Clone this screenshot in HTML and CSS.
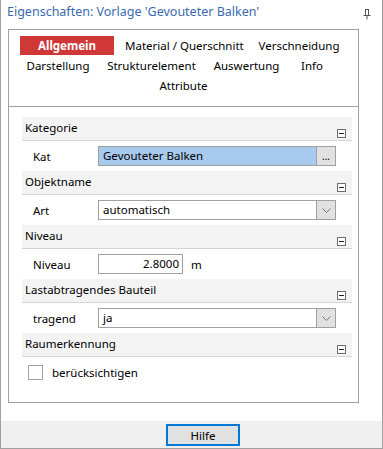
FILE: index.html
```html
<!DOCTYPE html>
<html lang="de">
<head>
  <meta charset="UTF-8">
  <title>Eigenschaften</title>
<link rel="stylesheet" href="styles.css">
</head>
<body>
<div class="window">
  <div class="titlebar">
    <span class="title">Eigenschaften: Vorlage 'Gevouteter Balken'</span>
    <svg class="pin" width="8" height="12" viewBox="0 0 8 12">
      <path d="M0.5 7.5h7M2.5 1.5v6M5.5 1.5v6M2 1.5h4M4 7.5v4" stroke="#555" stroke-width="1" fill="none"/>
    </svg>
  </div>
  <div class="panel">
    <div class="tabs">
      <div class="tab-row row-three">
        <span class="tab active">Allgemein</span>
        <span class="tab">Material / Querschnitt</span>
        <span class="tab">Verschneidung</span>
      </div>
      <div class="tab-row row-four">
        <span class="tab t1">Darstellung</span>
        <span class="tab t2">Strukturelement</span>
        <span class="tab t3">Auswertung</span>
        <span class="tab t4">Info</span>
      </div>
      <div class="tab-row row-one">
        <span class="tab">Attribute</span>
      </div>
    </div>
    <div class="groups">
      <div class="group">
        <div class="group-head"><span>Kategorie</span><i class="collapse"></i></div>
        <div class="prop">
          <span class="prop-label">Kat</span>
          <div class="field selected">
            <span class="field-text">Gevouteter Balken</span>
            <span class="field-btn">...</span>
          </div>
        </div>
      </div>
      <div class="group">
        <div class="group-head"><span>Objektname</span><i class="collapse"></i></div>
        <div class="prop">
          <span class="prop-label">Art</span>
          <div class="field">
            <span class="field-text">automatisch</span>
            <span class="field-btn">
              <svg width="9" height="5" viewBox="0 0 9 5"><path d="M0.5 0.5l4 4 4-4" stroke="#777" fill="none"/></svg>
            </span>
          </div>
        </div>
      </div>
      <div class="group">
        <div class="group-head"><span>Niveau</span><i class="collapse"></i></div>
        <div class="prop">
          <span class="prop-label">Niveau</span>
          <div class="field short"><span class="field-text num">2.8000</span></div>
          <span class="unit">m</span>
        </div>
      </div>
      <div class="group">
        <div class="group-head"><span>Lastabtragendes Bauteil</span><i class="collapse"></i></div>
        <div class="prop">
          <span class="prop-label">tragend</span>
          <div class="field">
            <span class="field-text">ja</span>
            <span class="field-btn">
              <svg width="9" height="5" viewBox="0 0 9 5"><path d="M0.5 0.5l4 4 4-4" stroke="#777" fill="none"/></svg>
            </span>
          </div>
        </div>
      </div>
      <div class="group">
        <div class="group-head"><span>Raumerkennung</span><i class="collapse"></i></div>
        <label class="check-row"><span class="checkbox"></span>berücksichtigen</label>
      </div>
    </div>
  </div>
  <div class="spacer"></div>
  <div class="footer">
    <button class="help">Hilfe</button>
  </div>
</div>
</body>
</html>
```

FILE: styles.css
```css
body {
  margin: 0;
  padding: 0;
  font-family: "Noto Sans", "Liberation Sans", sans-serif;
  font-size: 11.5px;
  color: #000;
  background: #fff;
}
.window {
  width: 383px;
  height: 449px;
  box-sizing: border-box;
  border: 1px solid #a0a0a0;
  border-top: none;
  display: flex;
  flex-direction: column;
}
.titlebar {
  height: 29px;
  display: flex;
  align-items: flex-start;
  justify-content: space-between;
}
.title {
  margin: 3px 0 0 6px;
  font-size: 12.5px;
  color: #3a6ab0;
}
.pin {
  margin: 8px 11px 0 0;
}
.panel {
  margin-left: 7px;
  width: 351px;
  height: 374px;
  box-sizing: border-box;
  border: 1px solid #a0a0a0;
}
.tabs {
  height: 77px;
  box-sizing: border-box;
  padding-top: 5px;
  border-bottom: 1px solid #a0a0a0;
}
.tab-row {
  display: flex;
  height: 20px;
  align-items: center;
}
.tab {
  white-space: nowrap;
  text-align: center;
}
.row-three .tab {
  width: 116px;
}
.tab.active {
  width: 94px;
  height: 19px;
  line-height: 19px;
  margin: 0 11px;
  background: #d03737;
  color: #fff;
  font-weight: bold;
}
.t1 {
  width: 98px;
}
.t2 {
  width: 89px;
}
.t3 {
  width: 101px;
}
.t4 {
  width: 30px;
}
.row-one {
  justify-content: center;
}
.groups {
  padding: 10px 6px 0 13px;
}
.group-head {
  height: 23px;
  background: #f3f3f3;
  border-bottom: 1px solid #d5d5d5;
  display: flex;
  justify-content: space-between;
  padding: 0 6px 0 3px;
}
.group-head span {
  margin-top: 3px;
}
.collapse {
  align-self: flex-end;
  margin-bottom: 2px;
  width: 9px;
  height: 9px;
  box-sizing: border-box;
  border: 1px solid #6d6d6d;
  background: #fff;
  position: relative;
}
.collapse::after {
  content: "";
  position: absolute;
  left: 1px;
  right: 1px;
  top: 3px;
  height: 1px;
  background: #222;
}
.prop {
  height: 30px;
  display: flex;
  align-items: center;
}
.prop-label {
  width: 65px;
  padding-left: 11px;
}
.field {
  width: 238px;
  height: 20px;
  box-sizing: border-box;
  border: 1px solid #a0a0a0;
  display: flex;
  align-items: stretch;
  background: #fff;
}
.field.selected {
  background: #a8caee;
}
.field-text {
  flex: 1;
  padding-left: 4px;
  line-height: 17px;
}
.field-text.num {
  text-align: right;
  padding: 0 3px 0 0;
}
.field-btn {
  width: 18px;
  border-left: 1px solid #a0a0a0;
  background: #e1e1e1;
  display: flex;
  align-items: center;
  justify-content: center;
  font-size: 10px;
}
.field.short {
  width: 85px;
}
.unit {
  margin-left: 8px;
}
.check-row {
  display: flex;
  align-items: center;
  height: 30px;
  padding-left: 6px;
}
.checkbox {
  width: 13px;
  height: 13px;
  border: 1px solid #a0a0a0;
  margin-right: 9px;
}
.spacer {
  flex: 1;
}
.footer {
  height: 27px;
  background: #f0f0f0;
}
.help {
  margin: 3px 0 0 165px;
  width: 74px;
  height: 22px;
  box-sizing: border-box;
  border: 2px solid #0078d7;
  background: #e1e1e1;
  font-family: "Noto Sans", "Liberation Sans", sans-serif;
  font-size: 11.5px;
  padding: 0;
}
```
